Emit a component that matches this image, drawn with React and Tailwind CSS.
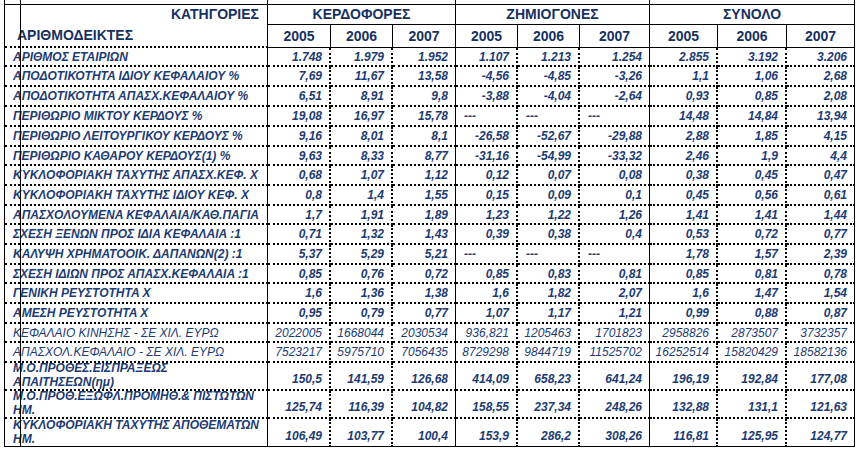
import React from "react";

const rows = [
  ["ΑΡΙΘΜΟΣ ΕΤΑΙΡΙΩΝ", ["1.748", "1.979", "1.952", "1.107", "1.213", "1.254", "2.855", "3.192", "3.206"], 19],
  ["ΑΠΟΔΟΤΙΚΟΤΗΤΑ ΙΔΙΟΥ ΚΕΦΑΛΑΙΟΥ %", ["7,69", "11,67", "13,58", "-4,56", "-4,85", "-3,26", "1,1", "1,06", "2,68"], 20],
  ["ΑΠΟΔΟΤΙΚΟΤΗΤΑ ΑΠΑΣΧ.ΚΕΦΑΛΑΙΟΥ %", ["6,51", "8,91", "9,8", "-3,88", "-4,04", "-2,64", "0,93", "0,85", "2,08"], 20],
  ["ΠΕΡΙΘΩΡΙΟ ΜΙΚΤΟΥ ΚΕΡΔΟΥΣ %", ["19,08", "16,97", "15,78", "---", "---", "---", "14,48", "14,84", "13,94"], 20],
  ["ΠΕΡΙΘΩΡΙΟ ΛΕΙΤΟΥΡΓΙΚΟΥ ΚΕΡΔΟΥΣ %", ["9,16", "8,01", "8,1", "-26,58", "-52,67", "-29,88", "2,88", "1,85", "4,15"], 20],
  ["ΠΕΡΙΘΩΡΙΟ ΚΑΘΑΡΟΥ ΚΕΡΔΟΥΣ(1) %", ["9,63", "8,33", "8,77", "-31,16", "-54,99", "-33,32", "2,46", "1,9", "4,4"], 19],
  ["ΚΥΚΛΟΦΟΡΙΑΚΗ ΤΑΧΥΤΗΣ ΑΠΑΣΧ.ΚΕΦ. Χ", ["0,68", "1,07", "1,12", "0,12", "0,07", "0,08", "0,38", "0,45", "0,47"], 20],
  ["ΚΥΚΛΟΦΟΡΙΑΚΗ ΤΑΧΥΤΗΣ ΙΔΙΟΥ ΚΕΦ. Χ", ["0,8", "1,4", "1,55", "0,15", "0,09", "0,1", "0,45", "0,56", "0,61"], 20],
  ["ΑΠΑΣΧΟΛΟΥΜΕΝΑ ΚΕΦΑΛΑΙΑ/ΚΑΘ.ΠΑΓΙΑ", ["1,7", "1,91", "1,89", "1,23", "1,22", "1,26", "1,41", "1,41", "1,44"], 19],
  ["ΣΧΕΣΗ ΞΕΝΩΝ ΠΡΟΣ ΙΔΙΑ ΚΕΦΑΛΑΙΑ :1", ["0,71", "1,32", "1,43", "0,39", "0,38", "0,4", "0,53", "0,72", "0,77"], 20],
  ["ΚΑΛΥΨΗ ΧΡΗΜΑΤΟΟΙΚ. ΔΑΠΑΝΩΝ(2) :1", ["5,37", "5,29", "5,21", "---", "---", "---", "1,78", "1,57", "2,39"], 20],
  ["ΣΧΕΣΗ ΙΔΙΩΝ ΠΡΟΣ ΑΠΑΣΧ.ΚΕΦΑΛΑΙΑ :1", ["0,85", "0,76", "0,72", "0,85", "0,83", "0,81", "0,85", "0,81", "0,78"], 19],
  ["ΓΕΝΙΚΗ ΡΕΥΣΤΟΤΗΤΑ Χ", ["1,6", "1,36", "1,38", "1,6", "1,82", "2,07", "1,6", "1,47", "1,54"], 20],
  ["ΑΜΕΣΗ ΡΕΥΣΤΟΤΗΤΑ Χ", ["0,95", "0,79", "0,77", "1,07", "1,17", "1,21", "0,99", "0,88", "0,87"], 20],
  ["ΚΕΦΑΛΑΙΟ ΚΙΝΗΣΗΣ - ΣΕ ΧΙΛ. ΕΥΡΩ", ["2022005", "1668044", "2030534", "936,821", "1205463", "1701823", "2958826", "2873507", "3732357"], 19, true],
  ["ΑΠΑΣΧΟΛ.ΚΕΦΑΛΑΙΟ - ΣΕ ΧΙΛ. ΕΥΡΩ", ["7523217", "5975710", "7056435", "8729298", "9844719", "11525702", "16252514", "15820429", "18582136"], 20, true],
];

const tallRows = [
  [["Μ.Ο.ΠΡΟΘΕΣ.ΕΙΣΠΡΑΞΕΩΣ", "ΑΠΑΙΤΗΣΕΩΝ(ημ)"], ["150,5", "141,59", "126,68", "414,09", "658,23", "641,24", "196,19", "192,84", "177,08"]],
  [["Μ.Ο.ΠΡΟΘ.ΕΞΩΦΛ.ΠΡΟΜΗΘ.& ΠΙΣΤΩΤΩΝ", "ΗΜ."], ["125,74", "116,39", "104,82", "158,55", "237,34", "248,26", "132,88", "131,1", "121,63"]],
  [["ΚΥΚΛΟΦΟΡΙΑΚΗ ΤΑΧΥΤΗΣ ΑΠΟΘΕΜΑΤΩΝ", "ΗΜ."], ["106,49", "103,77", "100,4", "153,9", "286,2", "308,26", "116,81", "125,95", "124,77"]],
];

const heights = { 19: "h-[19px]", 20: "h-[20px]" };

// right border of a number cell: solid at the end of each group, dotted inside
function sideBorder(i) {
  return i % 3 === 2
    ? "border-r border-dotted [border-right-style:solid]"
    : "border-r-2 border-dotted";
}

function NumCell({ value, i, h, thin, last, tall }) {
  const dash = value === "---";
  return (
    <div
      className={`${h} flex ${tall ? "items-end pb-[1px]" : "items-center"} ${
        dash ? "justify-start pl-[8px]" : "justify-end pr-[7px]"
      } border-black ${sideBorder(i)} ${
        last ? "border-b [border-bottom-style:solid]" : "border-b-2"
      } text-[12px] italic ${thin ? "font-normal" : "font-bold"} text-[#1d3b73]`}
    >
      {value}
    </div>
  );
}

export default function App() {
  const years = ["2005", "2006", "2007", "2005", "2006", "2007", "2005", "2006", "2007"];
  return (
    <div className="w-[860px] h-[450px] bg-white overflow-hidden font-['Liberation_Sans',Arial,sans-serif]">
      <div className="relative ml-[4px] w-[851px] border-l border-black grid grid-cols-[263px_63px_62px_63px_62px_62px_70px_68px_69px_68px]">
        {/* header row 1 */}
        <div className="h-[25px] pt-[4px] flex items-center justify-end pr-[8px] border-r border-black text-[14px] font-bold text-[#17315f]">
          ΚΑΤΗΓΟΡΙΕΣ
        </div>
        {["ΚΕΡΔΟΦΟΡΕΣ", "ΖΗΜΙΟΓΟΝΕΣ", "ΣΥΝΟΛΟ"].map((g) => (
          <div
            key={g}
            className="col-span-3 h-[25px] pt-[4px] flex items-center justify-center border-r border-b border-black text-[14px] font-bold text-[#17315f]"
          >
            {g}
          </div>
        ))}

        {/* header row 2 */}
        <div className="h-[23px] flex items-center pl-[12px] border-r border-b-2 border-black [border-bottom-style:dotted] text-[14px] font-bold text-[#17315f]">
          ΑΡΙΘΜΟΔΕΙΚΤΕΣ
        </div>
        {years.map((y, i) => (
          <div
            key={i}
            className="h-[23px] flex items-center justify-center border-r border-b border-black text-[14px] font-bold text-[#17315f]"
          >
            {y}
          </div>
        ))}

        {/* data rows */}
        {rows.map(([label, vals, hh, thin]) => (
          <React.Fragment key={label}>
            <div
              className={`${heights[hh]} flex items-center pl-[8px] border-r border-b-2 border-dotted border-black [border-right-style:solid] text-[12px] italic ${
                thin ? "font-normal" : "font-bold"
              } text-[#1d3b73] whitespace-nowrap`}
            >
              {label}
            </div>
            {vals.map((v, i) => (
              <NumCell key={i} value={v} i={i} h={heights[hh]} thin={thin} />
            ))}
          </React.Fragment>
        ))}

        {tallRows.map(([lines, vals], r) => {
          const last = r === tallRows.length - 1;
          return (
            <React.Fragment key={lines[0]}>
              <div
                className={`h-[28px] flex flex-col justify-end pl-[8px] border-r border-dotted border-black [border-right-style:solid] ${
                  last ? "border-b [border-bottom-style:solid]" : "border-b-2"
                } text-[12px] leading-[14px] italic font-bold text-[#1d3b73] whitespace-nowrap`}
              >
                <span>{lines[0]}</span>
                <span>{lines[1]}</span>
              </div>
              {vals.map((v, i) => (
                <NumCell key={i} value={v} i={i} h="h-[28px]" last={last} tall />
              ))}
            </React.Fragment>
          );
        })}

        {/* top rule and the stray guide line of the sheet */}
        <div className="absolute left-0 right-0 top-[4px] h-px bg-black" />
        <div className="absolute left-[15px] top-0 bottom-0 w-px bg-black" />
      </div>
    </div>
  );
}
